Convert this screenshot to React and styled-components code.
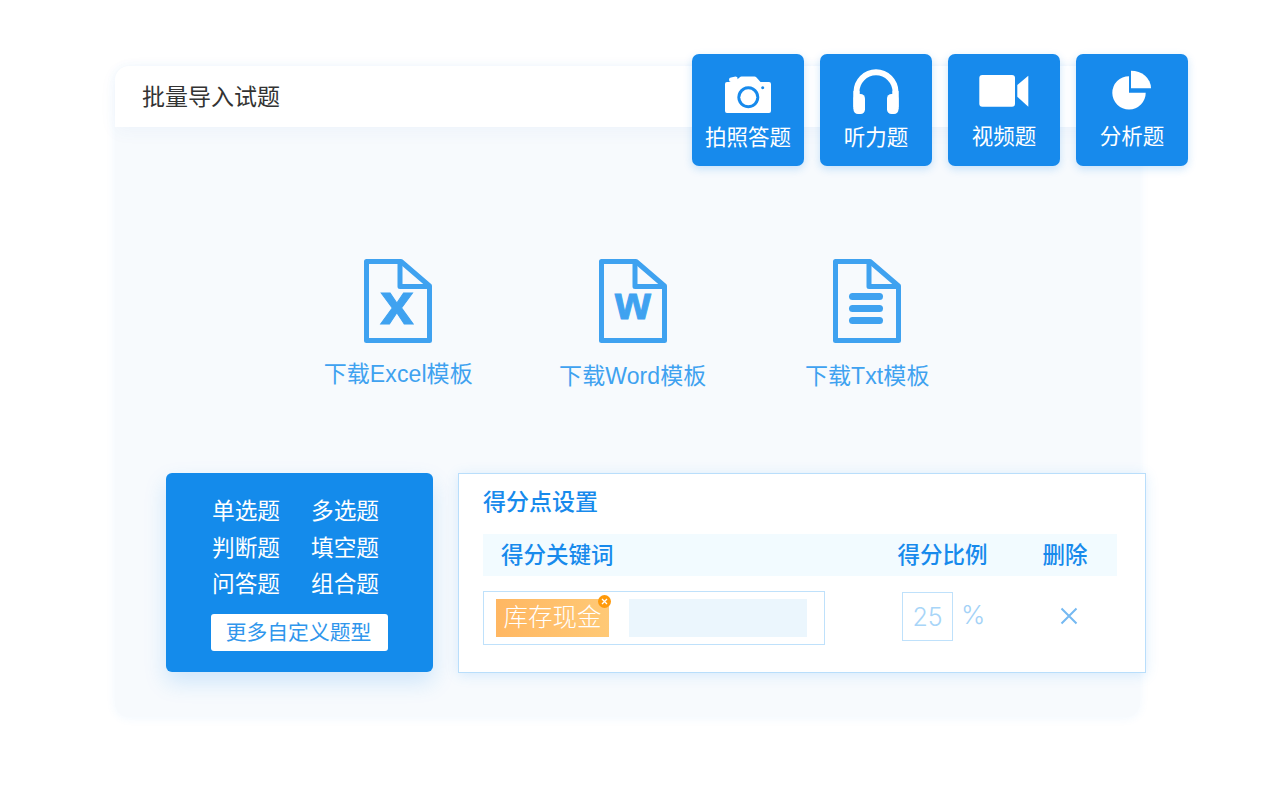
import React from 'react';
import styled, { createGlobalStyle } from 'styled-components';

const GlobalStyle = createGlobalStyle`
  html, body {
    margin: 0;
    padding: 0;
    background: #ffffff;
  }
  body {
    font-family: "Liberation Sans", "Noto Sans CJK SC", sans-serif;
  }
`;

const Page = styled.div`
  width: 1280px;
  height: 790px;
  padding: 66px 0 0 115px;
  box-sizing: border-box;
  overflow: hidden;
`;

const Card = styled.div`
  position: relative;
  width: 1025px;
  height: 651px;
  border-radius: 14px;
  background: #f7fafd;
  box-shadow: 0 1px 10px rgba(60, 150, 240, 0.08);
`;

const Header = styled.div`
  height: 61px;
  box-sizing: border-box;
  padding: 0 0 3px 27px;
  display: flex;
  align-items: center;
  border-radius: 14px 14px 0 0;
  background: #ffffff;
  box-shadow: 0 4px 18px rgba(60, 120, 200, 0.05);
  color: #333333;
  font-size: 23px;
`;

const TileGroup = styled.div`
  position: absolute;
  top: -12px;
  right: -48px;
  display: flex;
  gap: 16px;
`;

const Tile = styled.div`
  width: 112px;
  height: 112px;
  box-sizing: border-box;
  padding-top: 11px;
  display: flex;
  flex-direction: column;
  align-items: center;
  border-radius: 7px;
  background: #178aec;
  box-shadow: 0 3px 8px rgba(23, 138, 236, 0.22);
  color: #ffffff;
  font-size: 21.5px;
`;

const TileIcon = styled.svg`
  width: 60px;
  height: 56px;
  flex: none;
  fill: #ffffff;
`;

const TileLabel = styled.div`
  margin-top: ${props => props.$gap}px;
  line-height: 30px;
`;

const Downloads = styled.div`
  display: grid;
  grid-template-columns: repeat(3, 234.5px);
  margin: 132px 0 0 166px;
`;

const DownloadItem = styled.div`
  display: flex;
  flex-direction: column;
  align-items: center;
  color: #3fa2f0;
  font-size: 23px;
`;

const FileSvg = styled.svg`
  width: 68px;
  height: 84px;
  display: block;
`;

const DownloadLabel = styled.div`
  margin-top: ${props => props.$gap}px;
  line-height: 32px;
  letter-spacing: 0.1px;
  white-space: nowrap;
`;

const Bottom = styled.div`
  display: flex;
  gap: 26px;
  margin: 81px 0 0 51px;
`;

const TypesPanel = styled.div`
  flex: none;
  width: 267px;
  height: 199px;
  box-sizing: border-box;
  padding-top: 20px;
  display: flex;
  flex-direction: column;
  align-items: center;
  border-radius: 6px;
  background: #148beb;
  box-shadow: 0 10px 22px rgba(23, 138, 236, 0.18);
`;

const TypesGrid = styled.div`
  display: grid;
  grid-template-columns: repeat(2, 68px);
  column-gap: 31px;
  margin-right: 8px;
  color: #ffffff;
  font-size: 22.7px;
  line-height: 36.7px;
  white-space: nowrap;
`;

const MoreButton = styled.div`
  width: 177px;
  height: 37px;
  box-sizing: border-box;
  margin-top: 11px;
  padding: 0 2px 3px 0;
  display: flex;
  align-items: center;
  justify-content: center;
  border-radius: 3px;
  background: #ffffff;
  color: #2f96ec;
  font-size: 20.8px;
`;

const ScorePanel = styled.div`
  flex: none;
  width: 688px;
  height: 200px;
  box-sizing: border-box;
  padding: 12px 28px 0 24px;
  margin-left: -1px;
  border: 1px solid #b9defb;
  background: #ffffff;
  box-shadow: 0 2px 12px rgba(60, 160, 250, 0.18);
`;

const PanelTitle = styled.div`
  color: #178aec;
  font-size: 23px;
  font-weight: 500;
  line-height: 32px;
`;

const TableHead = styled.div`
  height: 42px;
  box-sizing: border-box;
  margin-top: 16px;
  padding-bottom: 4px;
  display: flex;
  align-items: center;
  background: #f2fbff;
  color: #178aec;
  font-size: 22.5px;
  font-weight: 500;
`;

const HeadCell = styled.div`
  margin-left: ${props => props.$left}px;
  white-space: nowrap;
`;

const TableRow = styled.div`
  margin-top: 15px;
  display: flex;
  align-items: flex-start;
`;

const KeywordBox = styled.div`
  width: 342px;
  height: 54px;
  box-sizing: border-box;
  padding: 7px 0 0 12px;
  display: flex;
  gap: 20px;
  border: 1px solid #bfe1fb;
`;

const Tag = styled.div`
  position: relative;
  width: 113px;
  height: 38px;
  box-sizing: border-box;
  padding-bottom: 5px;
  display: flex;
  align-items: center;
  justify-content: center;
  background: linear-gradient(90deg, #ffb762, #ffc976);
  color: #ffffff;
  font-size: 24.5px;
  font-weight: 300;
  white-space: nowrap;
`;

const TagClose = styled.svg`
  position: absolute;
  top: -4px;
  right: -2px;
  width: 13px;
  height: 13px;
`;

const BlankInput = styled.div`
  width: 178px;
  height: 38px;
  background: #ebf6fd;
`;

const RatioBox = styled.div`
  width: 51px;
  height: 49px;
  box-sizing: border-box;
  margin: 1px 0 0 77px;
  display: flex;
  align-items: center;
  justify-content: center;
  border: 1px solid #bfe1fb;
  color: #a8d5f8;
  font-family: "Inter", "Liberation Sans", sans-serif;
  font-size: 25px;
  font-weight: 300;
`;

const Percent = styled.div`
  margin: 10px 0 0 8px;
  color: #a3d2f7;
  font-family: "Inter", "Liberation Sans", sans-serif;
  font-size: 26px;
  font-weight: 300;
  line-height: 28px;
`;

const DeleteIcon = styled.svg`
  width: 18px;
  height: 18px;
  margin: 16px 0 0 75px;
`;

const CameraIcon = () => (
  <TileIcon viewBox="0 0 60 56">
    <path
      fillRule="evenodd"
      d="M13 12.500q-2 0-2 2.200t2 2.300h-4q-2 0-2 2v27q0 2 2 2h42q2 0 2-2v-27q0-2-2-2h-8.500l-4-4.500q-1-1-2-1h-13q-1 0-2 1l-2 1.800v-1.600q0-1-2-1.200zM30.300 21.300a11 11 0 1 0 .01 0zM44.700 21.200a1.500 1.500 0 1 0 .01 0z"
    />
    <circle cx="30.300" cy="32.300" r="8" />
  </TileIcon>
);

const HeadphonesIcon = () => (
  <TileIcon viewBox="0 0 60 56">
    <path d="M7.500 42V26.800a22.500 22.500 0 0 1 45 0V42h-6V26.800a16.500 16.500 0 0 0-33 0V42z" />
    <rect x="7.500" y="29" width="11.500" height="20" rx="4.500" />
    <rect x="41" y="29" width="11.500" height="20" rx="4.500" />
    <rect x="7.500" y="26" width="6" height="18" />
    <rect x="46.500" y="26" width="6" height="18" />
  </TileIcon>
);

const VideoIcon = () => (
  <TileIcon viewBox="0 0 60 56">
    <rect x="5.300" y="10" width="35.700" height="31.700" rx="3" />
    <path d="M43.300 20L54.300 10.700V41.700L43.300 31.700z" />
  </TileIcon>
);

const PieIcon = () => (
  <TileIcon viewBox="0 0 60 56">
    <path d="M27 11.200V27.700H43.700A16.700 16.700 0 1 1 27 11.200z" />
    <path d="M29 5.700A20 17.600 0 0 1 49 23.300H29z" />
  </TileIcon>
);

const FileIcon = ({ children }) => (
  <FileSvg viewBox="0 0 68 84">
    <path
      d="M2.500 2.500H37L65.500 27V81.500H2.500Z"
      fill="none"
      stroke="#3fa2f0"
      strokeWidth="5"
      strokeLinejoin="round"
    />
    <path d="M36 2.500V27.500H65" fill="none" stroke="#3fa2f0" strokeWidth="5" strokeLinejoin="round" />
    {children}
  </FileSvg>
);

const Letter = styled.text`
  fill: #3fa2f0;
  stroke: #3fa2f0;
  stroke-width: 1px;
  font-family: "Liberation Sans", sans-serif;
  font-weight: 700;
  text-anchor: middle;
`;

const TILES = [
  { label: '拍照答题', Icon: CameraIcon, gap: 2 },
  { label: '听力题', Icon: HeadphonesIcon, gap: 2 },
  { label: '视频题', Icon: VideoIcon, gap: 1 },
  { label: '分析题', Icon: PieIcon, gap: 1 },
];

const TYPES = ['单选题', '多选题', '判断题', '填空题', '问答题', '组合题'];

const App = () => {
  return (
    <Page>
      <GlobalStyle />
      <Card>
        <Header>批量导入试题</Header>
        <TileGroup>
          {TILES.map(({ label, Icon, gap }) => (
            <Tile key={label}>
              <Icon />
              <TileLabel $gap={gap}>{label}</TileLabel>
            </Tile>
          ))}
        </TileGroup>

        <Downloads>
          <DownloadItem>
            <FileIcon>
              <Letter x="33" y="65" fontSize="60">x</Letter>
            </FileIcon>
            <DownloadLabel $gap={15}>下载Excel模板</DownloadLabel>
          </DownloadItem>
          <DownloadItem>
            <FileIcon>
              <Letter x="34" y="60" fontSize="46">w</Letter>
            </FileIcon>
            <DownloadLabel $gap={17}>下载Word模板</DownloadLabel>
          </DownloadItem>
          <DownloadItem>
            <FileIcon>
              <rect x="16" y="34" width="34" height="7" rx="3.500" fill="#3fa2f0" />
              <rect x="16" y="46" width="34" height="7" rx="3.500" fill="#3fa2f0" />
              <rect x="16" y="58" width="34" height="7" rx="3.500" fill="#3fa2f0" />
            </FileIcon>
            <DownloadLabel $gap={17}>下载Txt模板</DownloadLabel>
          </DownloadItem>
        </Downloads>

        <Bottom>
          <TypesPanel>
            <TypesGrid>
              {TYPES.map(type => (
                <div key={type}>{type}</div>
              ))}
            </TypesGrid>
            <MoreButton>更多自定义题型</MoreButton>
          </TypesPanel>

          <ScorePanel>
            <PanelTitle>得分点设置</PanelTitle>
            <TableHead>
              <HeadCell $left={18}>得分关键词</HeadCell>
              <HeadCell $left={284}>得分比例</HeadCell>
              <HeadCell $left={55}>删除</HeadCell>
            </TableHead>
            <TableRow>
              <KeywordBox>
                <Tag>
                  库存现金
                  <TagClose viewBox="0 0 13 13">
                    <circle cx="6.500" cy="6.500" r="6.500" fill="#ff9a0a" />
                    <path d="M4 4l5 5M9 4l-5 5" stroke="#ffffff" strokeWidth="1.300" />
                  </TagClose>
                </Tag>
                <BlankInput />
              </KeywordBox>
              <RatioBox>25</RatioBox>
              <Percent>%</Percent>
              <DeleteIcon viewBox="0 0 18 18">
                <path d="M1.500 1.500l15 15M16.500 1.500l-15 15" stroke="#75b9f2" strokeWidth="2" />
              </DeleteIcon>
            </TableRow>
          </ScorePanel>
        </Bottom>
      </Card>
    </Page>
  );
};

export default App;
